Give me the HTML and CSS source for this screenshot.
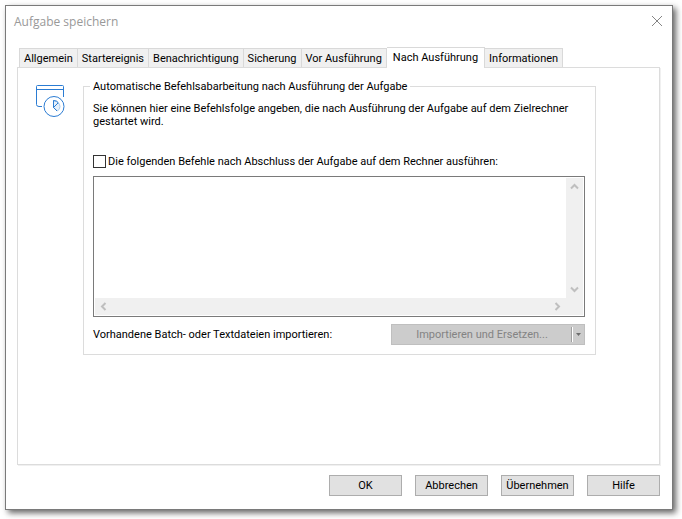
FILE: index.html
```html
<!DOCTYPE html>
<html lang="de">
<head>
    <meta charset="UTF-8">
    <meta name="viewport" content="width=device-width, initial-scale=1.0">
    <title>Aufgabe speichern</title>
    <link rel="stylesheet" href="styles.css">
</head>
<body>
    <div class="dialog" role="dialog" aria-labelledby="dialogTitle">
        <header class="title-bar">
            <h1 id="dialogTitle">Aufgabe speichern</h1>
            <button type="button" class="close-btn" aria-label="Schließen">
                <svg width="12" height="12" viewBox="0 0 12 12"><path d="M1 1L11 11M11 1L1 11" fill="none" stroke="#858585"/></svg>
            </button>
        </header>

        <div class="tabs" role="tablist">
            <button type="button" class="tab" role="tab">Allgemein</button>
            <button type="button" class="tab" role="tab">Startereignis</button>
            <button type="button" class="tab" role="tab">Benachrichtigung</button>
            <button type="button" class="tab" role="tab">Sicherung</button>
            <button type="button" class="tab" role="tab">Vor Ausführung</button>
            <button type="button" class="tab active" role="tab" aria-selected="true">Nach Ausführung</button>
            <button type="button" class="tab" role="tab">Informationen</button>
        </div>

        <main class="panel">
            <svg class="task-icon" width="30" height="34" viewBox="0 0 30 34" fill="none" stroke="#2b7cd3">
                <path d="M6 22.5H3Q.5 22.5 .5 20.5V2.5Q.5 1.5 1.5 1.5H26.5Q27.5 1.5 27.5 2.5V13M1 5.5H27"/>
                <circle cx="18" cy="22.5" r="10"/>
                <path d="M17.5 16.5V23.5L21.5 27Q24 25 24 22.5Q23.5 17.5 17.5 16.5Z" fill="#e6f0fa" stroke="#a9cbed"/>
                <path d="M17.5 16.5V23.5L21 27M17.5 23.5L22 19M17.5 16.5Q21 16.5 22.5 19"/>
            </svg>

            <fieldset class="group">
                <legend>Automatische Befehlsabarbeitung nach Ausführung der Aufgabe</legend>
                <p class="hint">Sie können hier eine Befehlsfolge angeben, die nach Ausführung der Aufgabe auf dem Zielrechner gestartet wird.</p>

                <div class="check-row">
                    <input type="checkbox" id="runCommands">
                    <label for="runCommands">Die folgenden Befehle nach Abschluss der Aufgabe auf dem Rechner ausführen:</label>
                </div>

                <div class="editor">
                    <textarea aria-label="Befehle" disabled></textarea>
                    <div class="scrollbar vertical">
                        <button type="button" aria-label="Nach oben" disabled><svg width="9" height="9" viewBox="0 0 9 9"><path d="M1 6.5L4.5 3L8 6.5"/></svg></button>
                        <button type="button" aria-label="Nach unten" disabled><svg width="9" height="9" viewBox="0 0 9 9"><path d="M1 2.5L4.5 6L8 2.5"/></svg></button>
                    </div>
                    <div class="scrollbar horizontal">
                        <button type="button" aria-label="Nach links" disabled><svg width="9" height="9" viewBox="0 0 9 9"><path d="M6.5 1L3 4.5L6.5 8"/></svg></button>
                        <button type="button" aria-label="Nach rechts" disabled><svg width="9" height="9" viewBox="0 0 9 9"><path d="M2.5 1L6 4.5L2.5 8"/></svg></button>
                    </div>
                </div>

                <div class="import-row">
                    <span>Vorhandene Batch- oder Textdateien importieren:</span>
                    <div class="split-btn">
                        <button type="button" class="import-btn" disabled>Importieren und Ersetzen...</button>
                        <button type="button" class="drop-btn" aria-label="Weitere Optionen" disabled><svg width="5" height="3" viewBox="0 0 5 3"><path d="M0 0H5L2.5 3Z" fill="#6d6d6d"/></svg></button>
                    </div>
                </div>
            </fieldset>
        </main>

        <footer class="buttons">
            <button type="button" class="btn">OK</button>
            <button type="button" class="btn">Abbrechen</button>
            <button type="button" class="btn">Übernehmen</button>
            <button type="button" class="btn">Hilfe</button>
        </footer>
    </div>
</body>
</html>
```
FILE: styles.css
```css
* {
    margin: 0;
    padding: 0;
    box-sizing: border-box;
}

body {
    min-height: 100vh;
    padding: 5px 9px 9px 5px;
    display: flex;
    background: white;
    color: black;
    font-family: Tahoma, Roboto, sans-serif;
    font-size: 11px;
    line-height: 13px;
}

button {
    font: inherit;
    color: inherit;
    border: none;
    background: none;
}

.dialog {
    flex: 1;
    display: flex;
    flex-direction: column;
    padding: 0 12px 13px 11px;
    background: white;
    border: 1px solid #7a7a7a;
    box-shadow: 3px 3px 6px rgba(0, 0, 0, 0.6);
}

.title-bar {
    display: flex;
    justify-content: space-between;
    align-items: center;
    height: 30px;
    margin: 0 -3px 11px;
}

.title-bar h1 {
    font-family: "Segoe UI", "Open Sans", sans-serif;
    font-size: 12px;
    font-weight: normal;
    color: #999;
}

.close-btn {
    display: flex;
}

.tabs {
    display: flex;
    align-items: flex-end;
    padding-left: 2px;
}

.tab {
    height: 19px;
    padding: 0 4px;
    background: #f0f0f0;
    border: 1px solid #d9d9d9;
    border-width: 1px 1px 0 0;
    white-space: nowrap;
}

.tab:first-child {
    border-left-width: 1px;
}

.tab.active {
    height: 21px;
    margin-bottom: -1px;
    padding: 0 6px 1px;
    background: white;
    z-index: 1;
}

.panel {
    flex: 1;
    display: flex;
    align-items: flex-start;
    gap: 17px;
    padding: 12px 63px 12px 18px;
    border: 1px solid #dcdcdc;
    box-shadow: 1px 1px 0 #f0f0f0;
}

.task-icon {
    flex: none;
    margin-top: 4px;
}

.group {
    flex: 1;
    min-width: 0;
    padding: 0 10px 9px 9px;
    border: 1px solid #dcdcdc;
}

.group legend {
    margin-left: -3px;
    padding: 0 3px;
}

.hint {
    margin-top: 9px;
}

.check-row {
    display: flex;
    align-items: center;
    gap: 2px;
    margin-top: 27px;
}

.check-row input {
    appearance: none;
    width: 13px;
    height: 13px;
    border: 1px solid #333;
    background: white;
}

.editor {
    display: grid;
    grid-template-columns: 1fr 17px;
    grid-template-rows: 1fr 17px;
    height: 141px;
    margin-top: 8px;
    padding: 1px;
    border: 1px solid #7a7a7a;
}

.editor textarea {
    font: inherit;
    border: none;
    outline: none;
    resize: none;
    background: white;
}

.scrollbar {
    display: flex;
    justify-content: space-between;
    background: #f0f0f0;
}

.scrollbar button {
    display: flex;
    align-items: center;
    justify-content: center;
    width: 17px;
    height: 17px;
}

.scrollbar path {
    fill: none;
    stroke: #bfbfbf;
    stroke-width: 2;
}

.vertical {
    flex-direction: column;
}

.horizontal {
    grid-column: 1 / 3;
    padding-right: 17px;
}

.import-row {
    display: flex;
    align-items: center;
    justify-content: space-between;
    margin-top: 7px;
}

.split-btn {
    display: flex;
    align-items: center;
    width: 194px;
    height: 21px;
    background: #ccc;
    border: 1px solid #bfbfbf;
    color: #838383;
}

.import-btn {
    flex: 1;
}

.drop-btn {
    display: flex;
    align-items: center;
    justify-content: center;
    width: 12px;
    height: 15px;
    border-left: 1px solid white;
    box-shadow: -1px 0 0 #a0a0a0;
}

.buttons {
    display: flex;
    justify-content: flex-end;
    gap: 13px;
    margin-top: 10px;
}

.btn {
    width: 73px;
    height: 21px;
    background: #e1e1e1;
    border: 1px solid #adadad;
}
```
